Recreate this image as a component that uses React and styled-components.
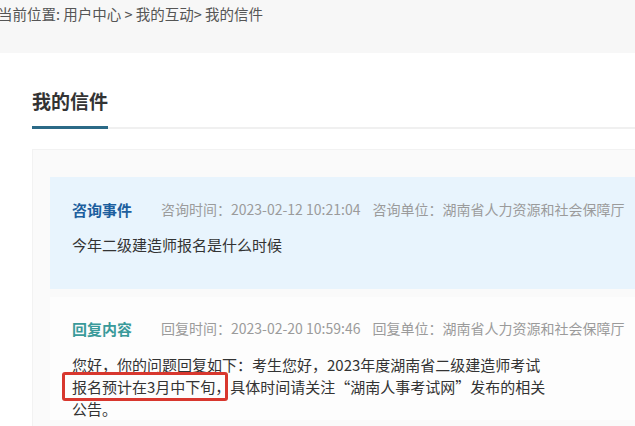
import React from "react";
import styled, { createGlobalStyle } from "styled-components";

const GlobalStyle = createGlobalStyle`
  html, body {
    margin: 0;
    padding: 0;
    background: #ffffff;
    overflow: hidden;
  }
  body {
    font-family: "Noto Sans CJK SC", "Noto Sans", sans-serif;
  }
`;

const Page = styled.div`
  width: 700px;
  min-height: 426px;
  background: #ffffff;
`;

const TopBar = styled.div`
  height: 53px;
  background: #f7f7f7;
  padding-top: 3px;
  box-sizing: border-box;
`;

const Crumb = styled.div`
  margin-left: -2px;
  font-size: 14.5px;
  line-height: 22px;
  color: #555555;
`;

const Heading = styled.div`
  margin: 33px 0 0 32px;
  border-bottom: 2px solid #f0f0f0;
  display: flex;
`;

const HeadingText = styled.h2`
  margin: 0;
  padding-bottom: 10px;
  font-size: 19px;
  line-height: 30px;
  font-weight: 700;
  color: #333333;
  border-bottom: 3px solid #2b6a87;
  margin-bottom: -2px;
`;

const Card = styled.div`
  margin: 20px 0 0 32px;
  padding: 27px 0 0 17px;
  background: #fafafa;
  border: 1px solid #f2f2f2;
  border-right: none;
  min-height: 300px;
`;

const Block = styled.div`
  background: ${(props) => (props.$reply ? "#fdfdfd" : "#e8f4fd")};
  padding: ${(props) => (props.$reply ? "20px 0 0 22px" : "21px 0 33px 22px")};
  margin-top: ${(props) => (props.$reply ? "8px" : "0")};
`;

const MetaRow = styled.div`
  display: flex;
  align-items: center;
  height: 22px;
`;

const Label = styled.span`
  font-size: 15px;
  font-weight: 700;
  color: ${(props) => props.$color};
  margin-right: 29px;
`;

const Meta = styled.span`
  font-size: 14px;
  color: #9b9b9b;
  margin-right: 12px;
  white-space: nowrap;
`;

const Body = styled.div`
  margin-top: ${(props) => props.$gap}px;
  font-size: 15px;
  line-height: 22px;
  color: #333333;
`;

const Marked = styled.span`
  position: relative;

  &::after {
    content: "";
    position: absolute;
    left: -10px;
    right: -13px;
    top: -4px;
    bottom: -4px;
    border: 3px solid #d8372e;
    border-radius: 3px;
  }
`;

export default function App() {
  return (
    <Page>
      <GlobalStyle />
      <TopBar>
        <Crumb>当前位置: 用户中心 &gt; 我的互动&gt; 我的信件</Crumb>
      </TopBar>
      <Heading>
        <HeadingText>我的信件</HeadingText>
      </Heading>
      <Card>
        <Block>
          <MetaRow>
            <Label $color="#1d5f9e">咨询事件</Label>
            <Meta>咨询时间：2023-02-12 10:21:04</Meta>
            <Meta>咨询单位：湖南省人力资源和社会保障厅</Meta>
          </MetaRow>
          <Body $gap={14}>今年二级建造师报名是什么时候</Body>
        </Block>
        <Block $reply>
          <MetaRow>
            <Label $color="#3a9a9a">回复内容</Label>
            <Meta>回复时间：2023-02-20 10:59:46</Meta>
            <Meta>回复单位：湖南省人力资源和社会保障厅</Meta>
          </MetaRow>
          <Body $gap={15}>
            您好，你的问题回复如下：考生您好，2023年度湖南省二级建造师考试
            <br />
            <Marked>报名预计在3月中下旬</Marked>，具体时间请关注“湖南人事考试网”发布的相关
            <br />
            公告。
          </Body>
        </Block>
      </Card>
    </Page>
  );
}
